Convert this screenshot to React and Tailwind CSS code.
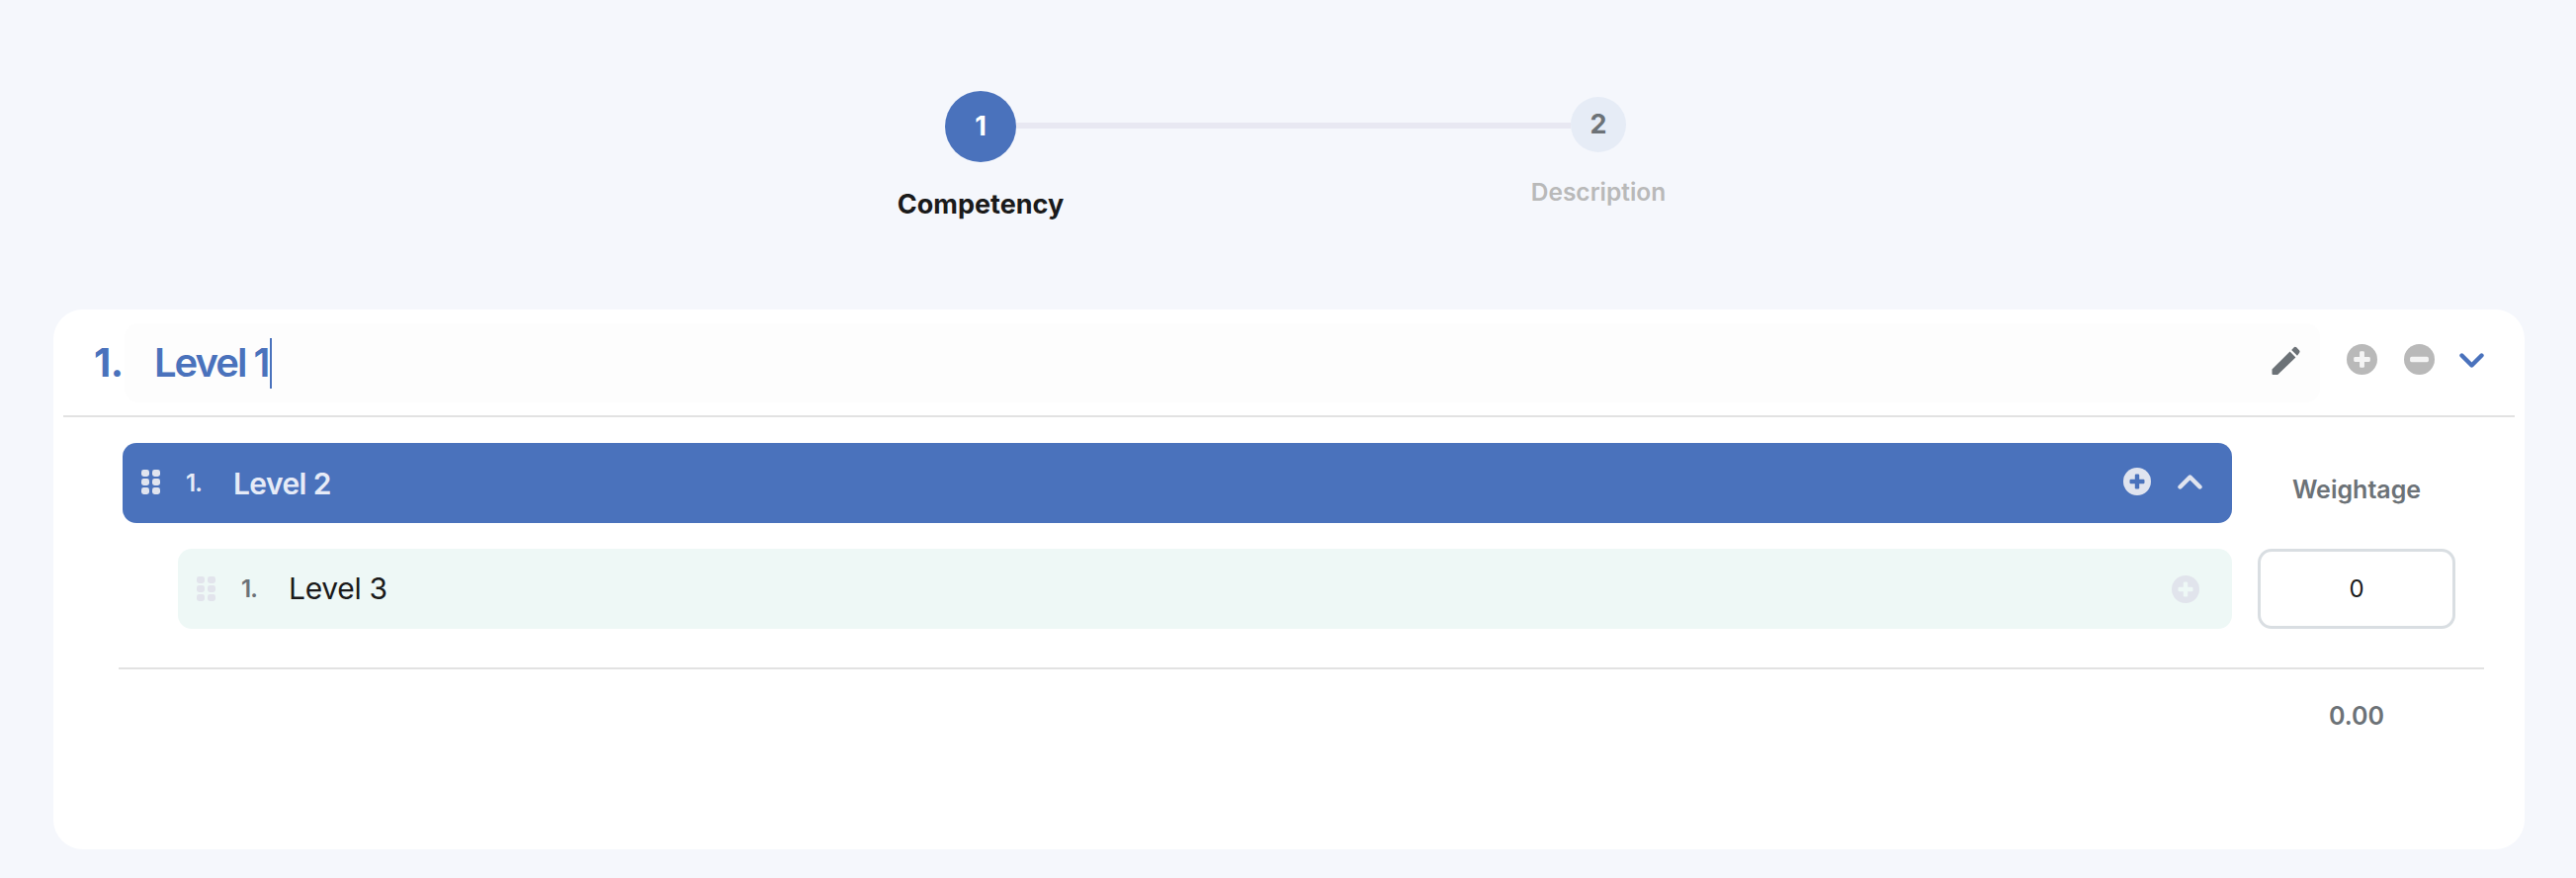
const font = { fontFamily: '"Inter", "Liberation Sans", sans-serif' }

function Grip({ fill }) {
    return <svg width="19" height="25" viewBox="0 0 19 25">
        {[0, 9, 18].map((y) => [0, 11].map((cx) => <rect key={`${y}-${cx}`} x={cx} y={y} width="8" height="7" rx="2.4" fill={fill} />))}
    </svg>
}

function PlusCircle({ size, fill, cross }) {
    return <svg width={size} height={size} viewBox="0 0 28 28">
        <circle cx="14" cy="14" r="14" fill={fill} />
        <rect x="6.5" y="11.8" width="15" height="4.4" rx="1.2" fill={cross} />
        <rect x="11.8" y="6.5" width="4.4" height="15" rx="1.2" fill={cross} />
    </svg>
}

function MinusCircle({ size, fill, cross }) {
    return <svg width={size} height={size} viewBox="0 0 28 28">
        <circle cx="14" cy="14" r="14" fill={fill} />
        <rect x="5.5" y="11.6" width="17" height="4.8" rx="1.4" fill={cross} />
    </svg>
}

function Chevron({ up, color }) {
    return <svg width="25" height="16" viewBox="0 0 25 16" fill="none">
        <path d={up ? "M2.5 13.5L12.5 3.5L22.5 13.5" : "M2.5 2.5L12.5 12.5L22.5 2.5"} stroke={color} strokeWidth="4.4" strokeLinecap="round" strokeLinejoin="round" />
    </svg>
}

function Pencil() {
    return <svg width="29" height="30" viewBox="0 0 29 30">
        <path d="M0.5 23.5L18.6 5.6L24.4 11.4L6.2 29H1.5Q0.5 29 0.5 28Z" fill="#6c7277" />
        <path d="M20.2 4L22.5 1.4Q23.8 0.2 25.2 1.3L28 4.2Q29.2 5.6 28 6.9L26 9.8Z" fill="#6c7277" />
    </svg>
}

export default function App() {
    return <div style={font} className="w-[2606px] h-[888px] bg-[#f5f7fc] overflow-hidden">
        {/* stepper */}
        <div className="grid grid-cols-[200px_425px_200px] ml-[892px] pt-[92px] h-[313px]">
            <div className="flex flex-col items-center">
                <div className="w-[72px] h-[72px] rounded-full bg-[#4a72bc] text-white font-bold text-[27px] flex items-center justify-center">1</div>
                <div className="mt-[26px] text-[27px] font-bold leading-[34px] text-[#1a1a1a] whitespace-nowrap">Competency</div>
            </div>
            <div className="h-[6px] mt-[32px] -ml-[64px] -mr-[72px] bg-[#e8e8f2]"></div>
            <div className="flex flex-col items-center pt-[6px]">
                <div className="w-[56px] h-[56px] rounded-full bg-[#e6ecf6] text-[#6c7277] font-bold text-[27px] flex items-center justify-center">2</div>
                <div className="mt-[24px] text-[24.5px] font-semibold leading-[32px] text-[#b9b9b9] whitespace-nowrap">Description</div>
            </div>
        </div>

        {/* card */}
        <div className="ml-[54px] w-[2500px] h-[546px] bg-white rounded-[30px] px-[10px]">
            <div className="h-[109px] border-b-2 border-[#e2e2e2] pt-[14px] flex items-start">
                <div className="w-[62px] pl-[31px] h-[80px] flex items-center text-[40px] font-bold tracking-[-0.5px] text-[#4a72bc] shrink-0">1.</div>
                <div className="w-[2221px] h-[80px] bg-[#fdfdfd] rounded-[14px] flex items-center pl-[30px] pr-[20px] shrink-0">
                    <span className="text-[40px] font-semibold tracking-[-2px] text-[#4a72bc] whitespace-nowrap">Level 1</span>
                    <span className="w-[2px] h-[51px] ml-[2px] bg-[#4a72bc]"></span>
                    <span className="ml-auto mb-[5px]"><Pencil /></span>
                </div>
                <div className="h-[73px] flex items-center ml-[27px] gap-[27px]">
                    <PlusCircle size={31} fill="#b9b9b9" cross="#f4f4f4" />
                    <MinusCircle size={31} fill="#b9b9b9" cross="#f4f4f4" />
                    <span className="ml-[-2px] flex mt-[2px]"><Chevron color="#4a72bc" /></span>
                </div>
            </div>

            <div className="pl-[60px] pr-[60px] pt-[26px]">
                <div className="flex gap-[26px]">
                    <div className="w-[2134px] h-[81px] rounded-[14px] bg-[#4a72bc] flex items-center pl-[19px] pr-[30px] text-[#e6ebf7]">
                        <span className="flex mb-[2px]"><Grip fill="#e0e4ef" /></span>
                        <span className="ml-[26px] w-[48px] text-[24px] font-semibold tracking-[-1px]">1.</span>
                        <span className="text-[30px] font-semibold tracking-[-0.6px] mt-[1px]">Level 2</span>
                        <span className="ml-auto mr-[27px] flex mb-[3px]"><PlusCircle size={28} fill="#e0e4ef" cross="#4a72bc" /></span>
                        <span className="flex mb-[3px]"><Chevron up color="#e0e4ef" /></span>
                    </div>
                    <div className="w-[200px] h-[81px] pt-[26px] text-center text-[25px] font-semibold leading-[42px] text-[#6c7277]">Weightage</div>
                </div>
                <div className="flex gap-[26px] mt-[26px]">
                    <div className="ml-[56px] w-[2078px] h-[81px] rounded-[14px] bg-[#eef8f6] flex items-center pl-[19px] pr-[33px]">
                        <span className="flex mb-[1px]"><Grip fill="#e2e4ec" /></span>
                        <span className="ml-[26px] w-[48px] text-[24px] font-semibold tracking-[-1px] text-[#6c7277]">1.</span>
                        <span className="text-[30px] tracking-[-0.3px] text-[#1a1a1a]">Level 3</span>
                        <span className="ml-auto flex"><PlusCircle size={28} fill="#e1e4ec" cross="#eef8f6" /></span>
                    </div>
                    <div className="w-[200px] h-[81px] rounded-[14px] border-[3px] border-[#d9dee2] flex items-center justify-center text-[24px] text-[#1a1a1a]">0</div>
                </div>
                <div className="mt-[39px] -ml-[4px] w-[2393px] border-t-2 border-[#e2e2e2]"></div>
                <div className="ml-[2160px] w-[200px] mt-[31px] text-center text-[25px] font-semibold leading-[32px] text-[#6c7277]">0.00</div>
            </div>
        </div>
    </div>
}
